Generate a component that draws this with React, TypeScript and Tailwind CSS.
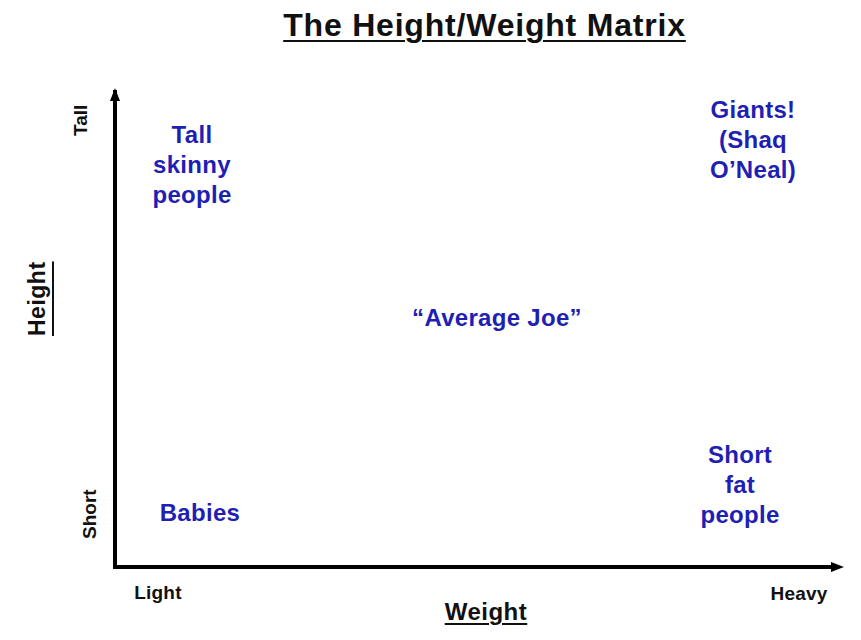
import { PropsWithChildren } from "react";

const Quadrant = ({ children, className }: PropsWithChildren<{ className?: string }>) => (
  <div className={`w-[150px] flex flex-col items-center text-[24px] leading-[30px] font-bold tracking-[0.3px] text-[#1f1fb4] whitespace-nowrap ${className ?? ""}`}>
    {children}
  </div>
);

// text that reads bottom to top, like the y axis labels
const Vertical = ({ children, className }: PropsWithChildren<{ className?: string }>) => (
  <span className={`[writing-mode:vertical-rl] rotate-180 text-center font-bold text-[#111] whitespace-nowrap ${className ?? ""}`}>
    {children}
  </span>
);

export default function App() {
  return (
    <div
      className="w-[861px] h-[640px] bg-white overflow-hidden flex flex-col"
      style={{ fontFamily: '"Liberation Sans", Arial, sans-serif' }}
    >
      <div className="flex justify-center pt-[5px] pl-[108px]">
        <h1 className="text-[32px] leading-[40px] font-bold tracking-[0.8px] text-[#111] underline decoration-2 underline-offset-[4px]">
          The Height/Weight Matrix
        </h1>
      </div>

      <div className="flex items-start">
        {/* y axis labels */}
        <div className="w-[113px] shrink-0 flex items-start pl-[23px]">
          <Vertical className="mt-[204px] h-[100px] w-[28px] text-[23px] leading-[28px] tracking-[0.5px] underline decoration-2 underline-offset-[3px]">
            Height
          </Vertical>
          <div className="flex flex-col items-start">
            <Vertical className="mt-[45px] ml-[18px] h-[60px] w-[24px] text-[19px] leading-[24px]">
              Tall
            </Vertical>
            <Vertical className="mt-[334px] ml-[27px] h-[60px] w-[24px] text-[19px] leading-[24px]">
              Short
            </Vertical>
          </div>
        </div>

        <div className="w-[748px] shrink-0 flex flex-col">
          {/* plot */}
          <div className="relative mt-[45px] w-[719px] h-[479px] border-l-4 border-b-4 border-black flex flex-col pt-[5px]">
            <svg className="absolute left-[-8px] top-[-3px]" width={12} height={14} viewBox="0 0 12 14">
              <polygon points="6,1 1,14 11,14" fill="#000" />
            </svg>
            <svg className="absolute right-[-12px] bottom-[-8px]" width={14} height={12} viewBox="0 0 14 12">
              <polygon points="1,1 14,6 1,11" fill="#000" />
            </svg>

            <div className="flex justify-between items-start pr-[4px]">
              <Quadrant className="mt-[25px]">
                <span>Tall</span>
                <span>skinny</span>
                <span>people</span>
              </Quadrant>
              <Quadrant>
                <span>Giants!</span>
                <span>(Shaq</span>
                <span>O&rsquo;Neal)</span>
              </Quadrant>
            </div>

            <div className="flex justify-center pl-[45px] mt-[93px]">
              <Quadrant className="w-auto">
                <span>&ldquo;Average Joe&rdquo;</span>
              </Quadrant>
            </div>

            <div className="flex justify-between items-start mt-[107px] pr-[17px]">
              <Quadrant className="mt-[58px] ml-[8px]">
                <span>Babies</span>
              </Quadrant>
              <Quadrant>
                <span>Short</span>
                <span>fat</span>
                <span>people</span>
              </Quadrant>
            </div>
          </div>

          {/* x axis labels */}
          <div className="flex items-start pl-[5px] font-bold text-[#111] whitespace-nowrap">
            <span className="w-[80px] mt-[12px] text-center text-[19px] leading-[24px] tracking-[0.2px]">Light</span>
            <span className="w-[120px] ml-[228px] mt-[28px] text-center text-[24px] leading-[30px] tracking-[0.5px] underline decoration-2 underline-offset-[3px]">
              Weight
            </span>
            <span className="w-[80px] ml-[213px] mt-[13px] text-center text-[19px] leading-[24px] tracking-[0.2px]">Heavy</span>
          </div>
        </div>
      </div>
    </div>
  );
}
